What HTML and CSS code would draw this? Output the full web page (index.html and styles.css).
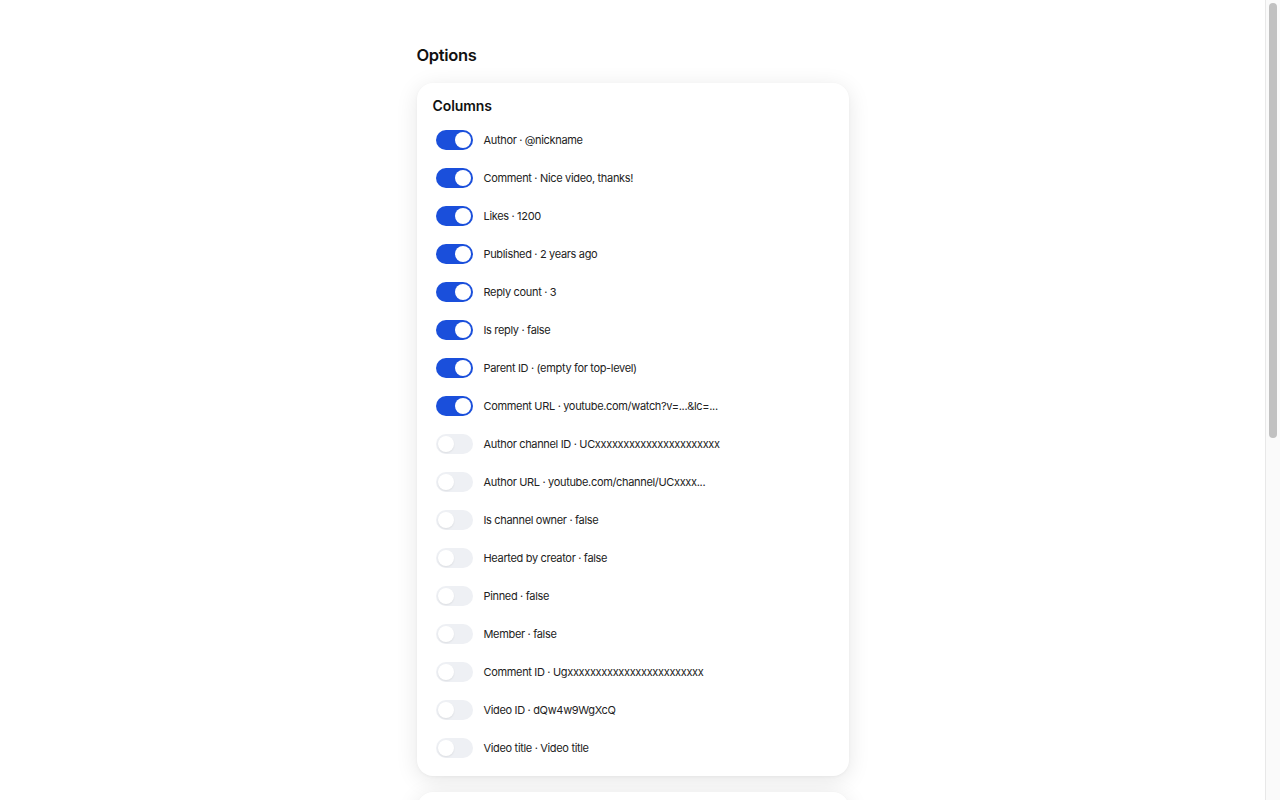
FILE: index.html
```html
<!DOCTYPE html>
<html lang="en">
<head>
<meta charset="utf-8">
<title>Options</title>
<link rel="stylesheet" href="styles.css">
</head>
<body>
<main class="page">
  <h1 class="title">Options</h1>
  <section class="card">
    <h2 class="card-title">Columns</h2>
    <ul class="list">
      <li class="row"><span class="toggle on"><span class="knob"></span></span><span class="label">Author · @nickname</span></li>
      <li class="row"><span class="toggle on"><span class="knob"></span></span><span class="label">Comment · Nice video, thanks!</span></li>
      <li class="row"><span class="toggle on"><span class="knob"></span></span><span class="label">Likes · 1200</span></li>
      <li class="row"><span class="toggle on"><span class="knob"></span></span><span class="label">Published · 2 years ago</span></li>
      <li class="row"><span class="toggle on"><span class="knob"></span></span><span class="label">Reply count · 3</span></li>
      <li class="row"><span class="toggle on"><span class="knob"></span></span><span class="label">Is reply · false</span></li>
      <li class="row"><span class="toggle on"><span class="knob"></span></span><span class="label">Parent ID · (empty for top-level)</span></li>
      <li class="row"><span class="toggle on"><span class="knob"></span></span><span class="label">Comment URL · youtube.com/watch?v=...&amp;lc=...</span></li>
      <li class="row"><span class="toggle"><span class="knob"></span></span><span class="label">Author channel ID · UCxxxxxxxxxxxxxxxxxxxxxx</span></li>
      <li class="row"><span class="toggle"><span class="knob"></span></span><span class="label">Author URL · youtube.com/channel/UCxxxx...</span></li>
      <li class="row"><span class="toggle"><span class="knob"></span></span><span class="label">Is channel owner · false</span></li>
      <li class="row"><span class="toggle"><span class="knob"></span></span><span class="label">Hearted by creator · false</span></li>
      <li class="row"><span class="toggle"><span class="knob"></span></span><span class="label">Pinned · false</span></li>
      <li class="row"><span class="toggle"><span class="knob"></span></span><span class="label">Member · false</span></li>
      <li class="row"><span class="toggle"><span class="knob"></span></span><span class="label">Comment ID · Ugxxxxxxxxxxxxxxxxxxxxxxxx</span></li>
      <li class="row"><span class="toggle"><span class="knob"></span></span><span class="label">Video ID · dQw4w9WgXcQ</span></li>
      <li class="row"><span class="toggle"><span class="knob"></span></span><span class="label">Video title · Video title</span></li>
    </ul>
  </section>
  <section class="card card-second">
    <h2 class="card-title">Export</h2>
    <ul class="list">
      <li class="row"><span class="toggle on"><span class="knob"></span></span><span class="label">Include header row</span></li>
      <li class="row"><span class="toggle on"><span class="knob"></span></span><span class="label">Include replies</span></li>
      <li class="row"><span class="toggle"><span class="knob"></span></span><span class="label">Sort by likes</span></li>
      <li class="row"><span class="toggle"><span class="knob"></span></span><span class="label">Strip emoji</span></li>
      <li class="row"><span class="toggle"><span class="knob"></span></span><span class="label">Convert dates to ISO 8601</span></li>
      <li class="row"><span class="toggle"><span class="knob"></span></span><span class="label">Open file after export</span></li>
    </ul>
  </section>
</main>
<div class="scrollbar" aria-hidden="true"><div class="scrollbar-thumb"></div></div>
</body>
</html>
```
FILE: styles.css
```css
html {
  margin: 0;
  padding: 0;
  background: #ffffff;
}
body {
  margin: 0;
  padding: 0 15px 0 0;
  background: #ffffff;
  font-family: Inter, "Noto Sans", "Liberation Sans", sans-serif;
  color: #1f1f1f;
}
.scrollbar {
  position: fixed;
  top: 0;
  right: 0;
  width: 14px;
  height: 100vh;
  background: #fafafa;
  border-left: 1px solid #e8e8e8;
}
.scrollbar-thumb {
  margin: 3px 0 0 3px;
  width: 8px;
  height: 435px;
  border-radius: 4px;
  background: #c1c1c1;
}
.page {
  width: 432px;
  margin: 0 auto;
  padding: 45px 0 40px;
}
.title {
  margin: 0 0 18px;
  font-size: 16.5px;
  line-height: 20px;
  font-weight: 600;
  color: #111;
  letter-spacing: -0.35px;
}
.card {
  background: #fff;
  border-radius: 16px;
  box-shadow: 0 4px 22px rgba(0, 0, 0, 0.10), 0 1px 3px rgba(0, 0, 0, 0.04);
  padding: 14px 16px 18px;
}
.card-second {
  margin-top: 16px;
  padding-bottom: 380px;
}
.card-title {
  margin: 0 0 15px;
  font-size: 14px;
  line-height: 18px;
  font-weight: 600;
  color: #111;
  letter-spacing: -0.1px;
}
.list {
  list-style: none;
  margin: 0;
  padding: 0 0 0 3px;
  display: flex;
  flex-direction: column;
  gap: 18px;
}
.row {
  display: flex;
  align-items: center;
  gap: 11px;
  height: 20px;
}
.toggle {
  position: relative;
  flex: none;
  width: 37px;
  height: 20px;
  border-radius: 10px;
  background: #eef0f4;
}
.toggle.on {
  background: #1a4fdb;
}
.knob {
  position: absolute;
  top: 2px;
  left: 2px;
  width: 16px;
  height: 16px;
  border-radius: 50%;
  background: #fff;
  box-shadow: 0 1px 2px rgba(0, 0, 0, 0.08);
}
.toggle.on .knob {
  left: 19px;
  box-shadow: none;
}
.label {
  font-size: 11px;
  line-height: 14px;
  color: #222;
  letter-spacing: -0.33px;
}
```
